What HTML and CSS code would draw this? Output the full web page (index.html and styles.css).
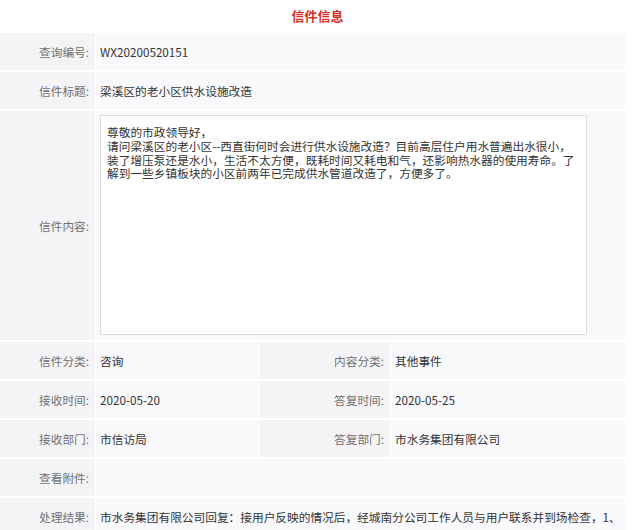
FILE: index.html
```html
<!DOCTYPE html>
<html lang="zh-CN">
<head>
    <meta charset="UTF-8">
    <meta name="viewport" content="width=device-width, initial-scale=1.0">
    <title>信件信息</title>
    <link rel="stylesheet" href="styles.css">
</head>
<body>
    <div class="letter">
        <h2 class="letter-title">信件信息</h2>

        <div class="info">
            <div class="row">
                <div class="label">查询编号:</div>
                <div class="value">WX20200520151</div>
            </div>
            <div class="row">
                <div class="label">信件标题:</div>
                <div class="value">梁溪区的老小区供水设施改造</div>
            </div>
            <div class="row row-content">
                <div class="label">信件内容:</div>
                <div class="value">
                    <div class="content-box">尊敬的市政领导好，<br>请问梁溪区的老小区--西直街何时会进行供水设施改造？目前高层住户用水普遍出水很小，<br>装了增压泵还是水小，生活不太方便，既耗时间又耗电和气，还影响热水器的使用寿命。了<br>解到一些乡镇板块的小区前两年已完成供水管道改造了，方便多了。</div>
                </div>
            </div>
            <div class="row">
                <div class="label">信件分类:</div>
                <div class="value half">咨询</div>
                <div class="label label-right">内容分类:</div>
                <div class="value">其他事件</div>
            </div>
            <div class="row">
                <div class="label">接收时间:</div>
                <div class="value half">2020-05-20</div>
                <div class="label label-right">答复时间:</div>
                <div class="value">2020-05-25</div>
            </div>
            <div class="row">
                <div class="label">接收部门:</div>
                <div class="value half">市信访局</div>
                <div class="label label-right">答复部门:</div>
                <div class="value">市水务集团有限公司</div>
            </div>
            <div class="row">
                <div class="label">查看附件:</div>
                <div class="value"></div>
            </div>
            <div class="row">
                <div class="label">处理结果:</div>
                <div class="value nowrap">市水务集团有限公司回复：接用户反映的情况后，经城南分公司工作人员与用户联系并到场检查，1、</div>
            </div>
        </div>
    </div>
</body>
</html>
```

FILE: styles.css
```css
* {
    margin: 0;
    padding: 0;
    box-sizing: border-box;
}

body {
    font-family: "Microsoft YaHei", "Noto Sans CJK SC", sans-serif;
    background-color: #ffffff;
    color: #333;
    font-size: 11.7px;
}

.letter {
    width: 625px;
}

.letter-title {
    height: 33px;
    line-height: 32px;
    text-align: center;
    font-size: 13px;
    font-weight: bold;
    color: #d3302b;
    padding-left: 10px;
}

.info {
    display: flex;
    flex-direction: column;
    gap: 2px;
}

.row {
    display: flex;
    height: 37px;
    gap: 1px;
}

.row-content {
    height: 229px;
}

.label {
    width: 95px;
    flex-shrink: 0;
    background-color: #f4f4f6;
    color: #707070;
    padding-right: 6px;
    display: flex;
    align-items: center;
    justify-content: flex-end;
}

.label-right {
    width: 131px;
}

.value {
    flex: 1;
    background-color: #f9f9fb;
    padding-left: 4px;
    display: flex;
    align-items: center;
    overflow: hidden;
}

.value.half {
    flex: none;
    width: 162px;
}

.nowrap {
    white-space: nowrap;
}

.row-content .value {
    align-items: flex-start;
    padding-top: 4px;
}

.content-box {
    width: 487px;
    height: 220px;
    background-color: #ffffff;
    border: 1px solid #dcdcdc;
    padding: 9px 6px;
    font-size: 11.7px;
    line-height: 13.8px;
    color: #333;
    white-space: nowrap;
}
```
